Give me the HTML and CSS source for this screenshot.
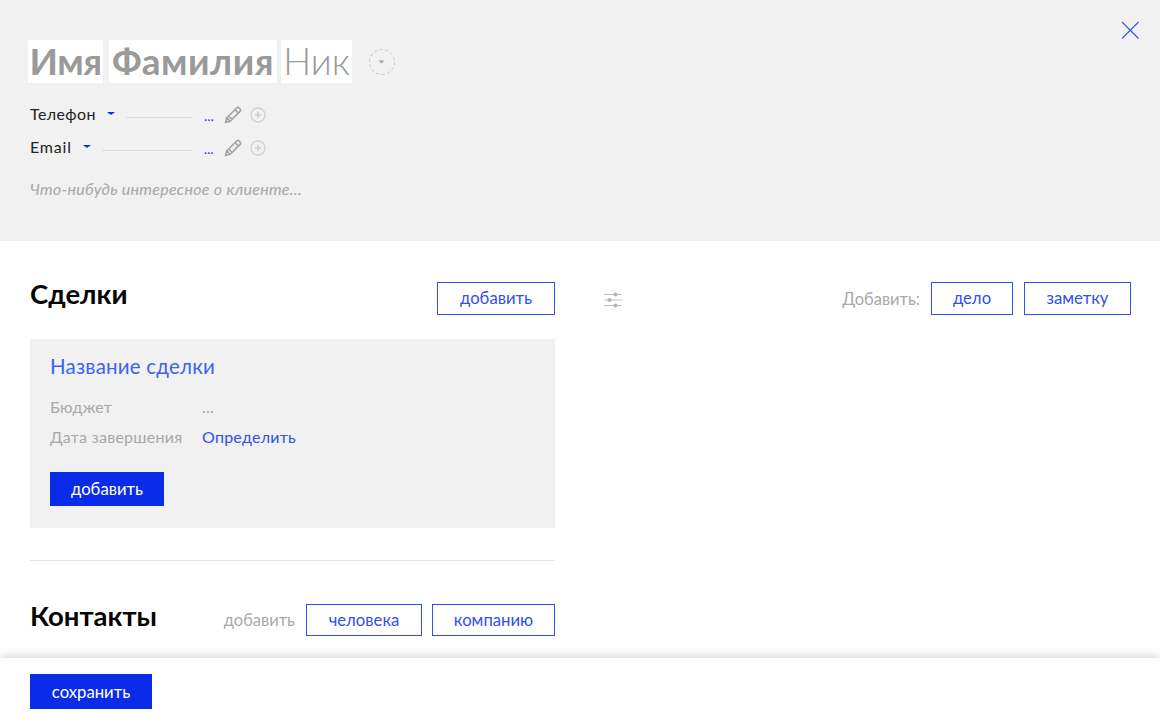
FILE: index.html
```html
<!DOCTYPE html>
<html lang="ru">
<head>
<meta charset="utf-8">
<title>Клиент</title>
<link rel="stylesheet" href="styles.css">
</head>
<body>
<div class="page">
  <header class="head">
    <div class="name-row">
      <span class="name-field bold first">Имя</span>
      <span class="name-field bold last">Фамилия</span>
      <span class="name-field light nick">Ник</span>
      <svg class="avatar" width="28" height="28" viewBox="0 0 28 28"><circle cx="14" cy="14" r="12.5" fill="none" stroke="#c4c4c4" stroke-width="1" stroke-dasharray="3.2 2.4"/><path d="M10.5 12.5h6l-3 3z" fill="#a8a8a8"/></svg>
    </div>
    <div class="contact-row">
      <span class="contact-label">Телефон</span>
      <span class="caret"></span>
      <span class="dots-line w-phone"></span>
      <span class="ellipsis">...</span>
      <svg class="pencil" width="18" height="18" viewBox="0 0 18 18"><path d="M1.5 16.5l1.2-4.6L12.6 2a1.8 1.8 0 0 1 2.5 0l.9.9a1.8 1.8 0 0 1 0 2.5L6.1 15.3zM2.7 11.9l3.4 3.4M4.6 10l3.4 3.4M11 3.6l3.4 3.4" fill="none" stroke="#a3a3a3" stroke-width="1.6"/></svg>
      <svg class="plus" width="16" height="16" viewBox="0 0 16 16"><circle cx="8" cy="8" r="7" fill="none" stroke="#cfcfcf" stroke-width="1.3"/><path d="M8 4.8v6.4M4.8 8h6.4" stroke="#c2c2c2" stroke-width="1.2"/></svg>
    </div>
    <div class="contact-row">
      <span class="contact-label email">Email</span>
      <span class="caret"></span>
      <span class="dots-line w-email"></span>
      <span class="ellipsis">...</span>
      <svg class="pencil" width="18" height="18" viewBox="0 0 18 18"><path d="M1.5 16.5l1.2-4.6L12.6 2a1.8 1.8 0 0 1 2.5 0l.9.9a1.8 1.8 0 0 1 0 2.5L6.1 15.3zM2.7 11.9l3.4 3.4M4.6 10l3.4 3.4M11 3.6l3.4 3.4" fill="none" stroke="#a3a3a3" stroke-width="1.6"/></svg>
      <svg class="plus" width="16" height="16" viewBox="0 0 16 16"><circle cx="8" cy="8" r="7" fill="none" stroke="#cfcfcf" stroke-width="1.3"/><path d="M8 4.8v6.4M4.8 8h6.4" stroke="#c2c2c2" stroke-width="1.2"/></svg>
    </div>
    <p class="about">Что-нибудь интересное о клиенте...</p>
    <svg class="close" width="20" height="20" viewBox="0 0 20 20"><path d="M2 2l16.500 16.500M18.500 2L2 18.500" stroke="#2f55f0" stroke-width="1.100" fill="none"/></svg>
  </header>

  <main class="main">
    <section class="left">
      <div class="section-head">
        <h2 class="title">Сделки</h2>
        <button class="btn wide">добавить</button>
      </div>
      <div class="card">
        <div class="card-title">Название сделки</div>
        <div class="card-row budget"><span class="card-key">Бюджет</span><span class="card-dots">...</span></div>
        <div class="card-row"><span class="card-key">Дата завершения</span><span class="card-link">Определить</span></div>
        <button class="btn-solid card-btn">добавить</button>
      </div>
      <hr class="divider">
      <div class="contacts-head">
        <h2 class="title contacts-title">Контакты</h2>
        <div class="contacts-actions">
          <span class="muted">добавить</span>
          <button class="btn person">человека</button>
          <button class="btn company">компанию</button>
        </div>
      </div>
    </section>
    <section class="right">
      <svg class="sliders" width="18" height="16" viewBox="0 0 18 16"><path d="M0 2.500h18M0 8h18M0 13.500h18" stroke="#c0c0c0" stroke-width="1.200"/><circle cx="11.500" cy="2.500" r="2" fill="#b5b5b5"/><circle cx="5.500" cy="8" r="2" fill="#b5b5b5"/><circle cx="11.500" cy="13.500" r="2" fill="#b5b5b5"/></svg>
      <div class="right-actions">
        <span class="muted">Добавить:</span>
        <button class="btn task">дело</button>
        <button class="btn note">заметку</button>
      </div>
    </section>
  </main>

  <footer class="foot">
    <button class="btn-solid save">сохранить</button>
  </footer>
</div>
</body>
</html>
```

FILE: styles.css
```css
* { box-sizing: border-box; }
html, body { margin: 0; height: 100%; }
body { font-family: "Lato", "Noto Sans", sans-serif; color: #1c1c1c; background: #fff; overflow: hidden; }
.page { height: 722px; display: flex; flex-direction: column; }

.head { position: relative; height: 241px; flex: none; background: #f1f1f1; padding: 40px 0 0 28px; }
.name-row { display: flex; align-items: center; height: 43px; margin-bottom: 20px; }
.name-field { height: 43px; background: #fff; color: #9a9a9a; font-size: 37px; line-height: 41px; text-align: center; white-space: nowrap; }
.name-field.bold { font-weight: 700; }
.name-field.light { font-weight: 300; }
.first { width: 75px; letter-spacing: -.5px; }
.last { width: 168px; margin-left: 6px; letter-spacing: .5px; }
.nick { width: 71px; margin-left: 4px; }
.avatar { margin: 1px 0 0 16px; }
.contact-row { display: flex; align-items: center; height: 22px; margin-bottom: 11px; padding-left: 2px; font-size: 16px; }
.contact-label { color: #222; letter-spacing: .4px; margin-bottom: 2px; }
.contact-label.email { letter-spacing: .8px; }
.caret { width: 0; height: 0; margin: 0 0 2px 11px; border-left: 4px solid transparent; border-right: 4px solid transparent; border-top: 3.5px solid #0a2be8; }
.dots-line { height: 1px; margin: 6px 0 0 11px; border-bottom: 1px solid #dcdcdc; }
.w-phone { width: 67px; }
.w-email { width: 91px; }
.ellipsis { margin: 4px 0 0 11px; color: #2a45ee; font-size: 14px; width: 10px; line-height: 1; }
.pencil { margin: 2px 0 0 10px; }
.plus { margin: 2px 0 0 8px; }
.about { margin: 21px 0 0 2px; font-size: 16px; letter-spacing: .3px; font-style: italic; color: #a6a6a6; }
.close { position: absolute; top: 20px; right: 20px; }

.main { flex: 1; min-height: 0; display: flex; padding: 41px 29px 0 30px; overflow: hidden; }
.left { width: 525px; flex: none; }
.right { flex: 1; margin-left: 49px; display: flex; justify-content: space-between; align-items: flex-start; }
.section-head { display: flex; justify-content: space-between; align-items: flex-start; height: 57px; }
.title { margin: 0; font-size: 27.500px; line-height: 24px; font-weight: 700; color: #050505; }
.btn { height: 33px; background: #fff; border: 1px solid #2f50ee; color: #2f50ee; font: 400 16.700px "Lato", sans-serif; padding: 0 0 1px; }
.btn.wide { width: 118px; }
.btn-solid { background: #0a2be8; border: 0; color: #fff; font: 400 16.700px "Lato", sans-serif; padding: 0; }

.card { height: 189px; background: #f1f1f1; padding: 15px 20px 0; }
.card-title { color: #3d63ee; font-size: 20.500px; line-height: 24px; margin-bottom: 19px; letter-spacing: .2px; }
.card-row { display: flex; height: 30px; line-height: 20px; font-size: 16px; letter-spacing: .25px; }
.card-key { width: 152px; color: #a8a8a8; }
.card-dots { color: #a8a8a8; }
.card-link { color: #2f50ee; }
.card-btn { display: block; width: 114px; height: 34px; margin-top: 15px; }
.divider { height: 1px; border: 0; background: #e4e4e4; margin: 32px 0 0; }

.contacts-head { display: flex; justify-content: space-between; align-items: center; margin-top: 43px; height: 32px; }
.contacts-title { padding-bottom: 8px; }
.contacts-actions { display: flex; align-items: center; }
.muted { color: #a9a9a9; font-size: 16.500px; }
.person { width: 116px; height: 32px; margin-left: 11px; }
.company { width: 123px; height: 32px; margin-left: 10px; }

.sliders { margin-top: 10px; }
.right-actions { display: flex; align-items: center; }
.task { width: 82px; margin-left: 11px; }
.note { width: 107px; margin-left: 11px; }

.foot { position: relative; height: 64px; flex: none; background: #fff; padding: 16px 0 0 30px; box-shadow: 0 -3px 8px rgba(0, 0, 0, .14); }
.save { display: block; width: 122px; height: 35px; }
```
